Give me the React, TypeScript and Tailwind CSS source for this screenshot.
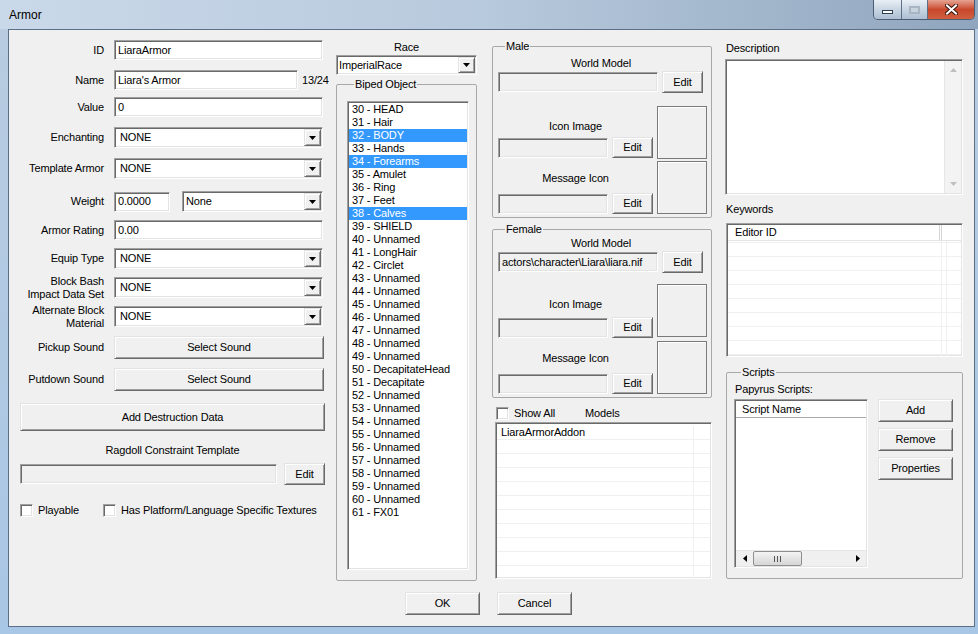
import React from 'react';

const sunken =
  'border border-t-[#a0a0a0] border-l-[#a0a0a0] border-r-white border-b-white shadow-[inset_1px_1px_0_#696969,inset_-1px_-1px_0_#e3e3e3]';
const raised =
  'border border-t-[#e3e3e3] border-l-[#e3e3e3] border-r-[#696969] border-b-[#696969] shadow-[inset_1px_1px_0_#ffffff,inset_-1px_-1px_0_#a0a0a0] bg-[#f0f0f0]';
const group = 'border border-[#a8a8a8] rounded-[2px] min-w-0';

const biped = [
  '30 - HEAD', '31 - Hair', '32 - BODY', '33 - Hands', '34 - Forearms', '35 - Amulet',
  '36 - Ring', '37 - Feet', '38 - Calves', '39 - SHIELD', '40 - Unnamed', '41 - LongHair',
  '42 - Circlet', '43 - Unnamed', '44 - Unnamed', '45 - Unnamed', '46 - Unnamed',
  '47 - Unnamed', '48 - Unnamed', '49 - Unnamed', '50 - DecapitateHead', '51 - Decapitate',
  '52 - Unnamed', '53 - Unnamed', '54 - Unnamed', '55 - Unnamed', '56 - Unnamed',
  '57 - Unnamed', '58 - Unnamed', '59 - Unnamed', '60 - Unnamed', '61 - FX01'
];
const selected = ['32 - BODY', '34 - Forearms', '38 - Calves'];

function Edit({ w, value = '', disabled = false, className = '' }: { w: string; value?: string; disabled?: boolean; className?: string }) {
  return (
    <div className={`${sunken} ${disabled ? 'bg-[#f0f0f0]' : 'bg-white'} h-[20px] flex items-center pl-[3px] whitespace-nowrap overflow-hidden shrink-0 ${w} ${className}`}>
      {value}
    </div>
  );
}

function Arrow() {
  return (
    <svg width="7" height="4" viewBox="0 0 7 4">
      <polygon points="0,0 7,0 3.5,4" fill="#000" />
    </svg>
  );
}

function Combo({ w, value, pad = 'pl-[5px]', h = 'h-[21px]', className = '' }: { w: string; value: string; pad?: string; h?: string; className?: string }) {
  return (
    <div className={`${sunken} bg-white ${h} ${w} flex items-stretch shrink-0 ${className}`}>
      <div className={`flex-1 flex items-center ${pad}`}>{value}</div>
      <div className={`${raised} w-[17px] m-[1px] flex items-center justify-center`}>
        <Arrow />
      </div>
    </div>
  );
}

function Btn({ className = '', children }: { className?: string; children: React.ReactNode }) {
  return <div className={`${raised} flex items-center justify-center shrink-0 ${className}`}>{children}</div>;
}

function Check({ className = '' }: { className?: string }) {
  return <div className={`${sunken} bg-white w-[13px] h-[13px] shrink-0 ${className}`} />;
}

function Row({ label, h, className = '', children }: { label: React.ReactNode; h: string; className?: string; children: React.ReactNode }) {
  return (
    <div className={`flex items-center ${h} ${className}`}>
      <div className="w-[84px] text-right leading-[13px] shrink-0">{label}</div>
      <div className="ml-[10px] flex items-center whitespace-nowrap">{children}</div>
    </div>
  );
}

function FieldRow({ value = '', w = 'w-[110px]', gap = 'ml-[4px]' }: { value?: string; w?: string; gap?: string }) {
  return (
    <div className="flex items-center">
      <Edit w={w} value={value} disabled />
      <Btn className={`${gap} w-[41px] h-[21px]`}>Edit</Btn>
    </div>
  );
}

function TitleButtons() {
  return (
    <div className="flex mr-[3px] h-[20px] rounded-b-[5px] border border-t-0 border-[#4a5d74] overflow-hidden">
      <div className="w-[28px] bg-linear-to-b from-[#e9eff5] via-[#c8d5e3] to-[#aebfd2] border-r border-[#5d6f85] flex items-center justify-center">
        <div className="w-[11px] h-[4px] bg-white border border-[#2f3f52] mt-[5px]" />
      </div>
      <div className="w-[26px] bg-linear-to-b from-[#e9eff5] via-[#c8d5e3] to-[#aebfd2] border-r border-[#5d6f85] flex items-center justify-center">
        <div className="w-[11px] h-[8px] border-2 border-[#a9b5c2] bg-[#c9d3de]" />
      </div>
      <div className="w-[46px] bg-linear-to-b from-[#e4a391] via-[#c9472c] to-[#d0603f] flex items-center justify-center">
        <svg width="13" height="11" viewBox="0 0 13 11">
          <path d="M2 1.5 L11 9.5 M11 1.5 L2 9.5" stroke="#3a1710" strokeWidth="4" strokeLinecap="square" />
          <path d="M2 1.5 L11 9.5 M11 1.5 L2 9.5" stroke="#ffffff" strokeWidth="2" strokeLinecap="square" />
        </svg>
      </div>
    </div>
  );
}

function LeftColumn() {
  return (
    <div className="w-[305px] ml-[11px] flex flex-col shrink-0">
      <Row className="mt-[10px]" h="h-[20px]" label="ID"><Edit w="w-[209px]" value="LiaraArmor" /></Row>
      <Row className="mt-[10px]" h="h-[20px]" label="Name">
        <Edit w="w-[184px]" value="Liara's Armor" />
        <span className="ml-[4px]">13/24</span>
      </Row>
      <Row className="mt-[7px]" h="h-[20px]" label="Value"><Edit w="w-[209px]" value="0" /></Row>
      <Row className="mt-[10px]" h="h-[21px]" label="Enchanting"><Combo w="w-[209px]" value="NONE" /></Row>
      <Row className="mt-[10px]" h="h-[21px]" label="Template Armor"><Combo w="w-[209px]" value="NONE" /></Row>
      <Row className="mt-[12px]" h="h-[21px]" label="Weight">
        <Edit w="w-[56px]" value="0.0000" />
        <Combo className="ml-[12px]" w="w-[141px]" value="None" pad="pl-[3px]" />
      </Row>
      <Row className="mt-[8px]" h="h-[20px]" label="Armor Rating"><Edit w="w-[209px]" value="0.00" /></Row>
      <Row className="mt-[8px]" h="h-[21px]" label="Equip Type"><Combo w="w-[209px]" value="NONE" /></Row>
      <Row className="mt-[8px]" h="h-[21px]" label={<>Block Bash<br />Impact Data Set</>}><Combo w="w-[209px]" value="NONE" /></Row>
      <Row className="mt-[8px]" h="h-[21px]" label={<>Alternate Block<br />Material</>}><Combo w="w-[209px]" value="NONE" /></Row>
      <Row className="mt-[9px]" h="h-[23px]" label="Pickup Sound"><Btn className="w-[210px] h-[23px]">Select Sound</Btn></Row>
      <Row className="mt-[9px]" h="h-[23px]" label="Putdown Sound"><Btn className="w-[210px] h-[23px]">Select Sound</Btn></Row>
      <Btn className="mt-[12px] w-[305px] h-[28px]">Add Destruction Data</Btn>
      <div className="mt-[13px] text-center leading-[13px]">Ragdoll Constraint Template</div>
      <div className="mt-[6px] h-[22px] flex items-center">
        <Edit w="w-[257px]" disabled />
        <Btn className="ml-[7px] w-[41px] h-[22px]">Edit</Btn>
      </div>
      <div className="mt-[18px] h-[14px] flex items-center whitespace-nowrap">
        <Check />
        <span className="ml-[5px]">Playable</span>
        <Check className="ml-[24px]" />
        <span className="ml-[5px]">Has Platform/Language Specific Textures</span>
      </div>
    </div>
  );
}

function MiddleColumn() {
  return (
    <div className="w-[141px] ml-[11px] flex flex-col shrink-0">
      <div className="mt-[11px] leading-[13px] text-center">Race</div>
      <Combo className="mt-[1px]" w="w-[141px]" h="h-[20px]" value="ImperialRace" pad="pl-[2px]" />
      <fieldset className={`${group} mt-[3px] h-[503px] pl-[10px] pr-[8px] pt-[10px]`}>
        <legend className="ml-[7px] px-[1px] leading-[13px]">Biped Object</legend>
        <div className={`${sunken} bg-white w-[122px] h-[469px] p-[1px] overflow-hidden`}>
          {biped.map((b) => (
            <div
              key={b}
              className={`h-[13px] leading-[13px] pl-[3px] whitespace-nowrap ${selected.includes(b) ? 'bg-[#3399ff] text-white' : ''}`}
            >
              {b}
            </div>
          ))}
        </div>
      </fieldset>
    </div>
  );
}

function ModelGroup({ title, path, className = '', female = false }: { title: string; path: string; className?: string; female?: boolean }) {
  return (
    <fieldset className={`${group} w-[220px] pl-[5px] pr-[3px] pb-[3px] ${className}`}>
      <legend className="ml-[7px] px-[1px] leading-[13px]">{title}</legend>
      <div className={`${female ? 'mt-[1px]' : 'mt-[4px]'} w-[206px] text-center leading-[13px]`}>World Model</div>
      <div className="mt-[1px] h-[22px] flex items-center">
        <Edit w="w-[160px]" value={path} disabled className="pl-[1px]" />
        <Btn className="ml-[4px] w-[41px] h-[22px]">Edit</Btn>
      </div>
      <div className={`${female ? 'mt-[11px]' : 'mt-[13px]'} flex`}>
        <div className="w-[155px] flex flex-col">
          <div className="mt-[14px] text-center leading-[13px]">Icon Image</div>
          <div className={female ? 'mt-[6px]' : 'mt-[4px]'}><FieldRow /></div>
          <div className="mt-[14px] text-center leading-[13px]">Message Icon</div>
          <div className="mt-[8px]"><FieldRow /></div>
        </div>
        <div className="ml-[4px] flex flex-col">
          <div className="w-[50px] h-[53px] border border-[#7a7a7a] shadow-[inset_1px_1px_0_#ffffff]" />
          <div className={`${female ? 'mt-[4px]' : 'mt-[2px]'} w-[50px] h-[53px] border border-[#7a7a7a] shadow-[inset_1px_1px_0_#ffffff]`} />
        </div>
      </div>
    </fieldset>
  );
}

function ThirdColumn() {
  return (
    <div className="w-[220px] ml-[15px] flex flex-col shrink-0">
      <ModelGroup className="mt-[10px]" title="Male" path="" />
      <ModelGroup className="mt-[5px]" title="Female" path="actors\character\Liara\liara.nif" female />
      <div className="mt-[9px] h-[13px] flex items-center ml-[4px] whitespace-nowrap">
        <Check />
        <span className="ml-[5px]">Show All</span>
        <span className="ml-[30px]">Models</span>
      </div>
      <div className={`${sunken} bg-white mt-[2px] ml-[3px] w-[217px] h-[157px] p-[1px] overflow-hidden`}>
        <div className="h-[2px]" />
        {Array.from({ length: 11 }).map((_, i) => (
          <div key={i} className="h-[14px] flex border-b border-[#f0f0f0]">
            <div className="w-[197px] pl-[4px] leading-[13px] border-r border-[#f0f0f0]">{i === 0 ? 'LiaraArmorAddon' : ''}</div>
            <div className="flex-1" />
          </div>
        ))}
      </div>
    </div>
  );
}

function RightColumn() {
  return (
    <div className="w-[237px] ml-[14px] flex flex-col shrink-0">
      <div className="mt-[12px] leading-[13px]">Description</div>
      <div className={`${sunken} bg-white mt-[4px] -ml-[1px] w-[238px] h-[136px] flex justify-end`}>
        <div className="w-[17px] my-[1px] mr-[1px] bg-[#f3f3f3] border-l border-[#e6e6e6] flex flex-col justify-between items-center py-[7px]">
          <svg width="7" height="4" viewBox="0 0 7 4"><polygon points="0,4 7,4 3.5,0" fill="#bfbfbf" /></svg>
          <svg width="7" height="4" viewBox="0 0 7 4"><polygon points="0,0 7,0 3.5,4" fill="#bfbfbf" /></svg>
        </div>
      </div>
      <div className="mt-[8px] leading-[13px]">Keywords</div>
      <div className={`${sunken} bg-white mt-[7px] w-[237px] h-[134px] p-[1px] overflow-hidden`}>
        <div className="h-[16px] flex border-b border-[#e5e5e5]">
          <div className="w-[212px] pl-[7px] flex items-center leading-[13px] border-r border-[#d5d5d5]">Editor ID</div>
          <div className="w-[2px] border-r border-[#d5d5d5]" />
          <div className="flex-1" />
        </div>
        <div className="h-[2px] flex border-b border-[#f0f0f0]">
          <div className="w-[214px] border-r border-[#f0f0f0]" />
          <div className="w-[5px] border-r border-[#f0f0f0]" />
        </div>
        {Array.from({ length: 9 }).map((_, i) => (
          <div key={i} className="h-[14px] flex border-b border-[#f0f0f0]">
            <div className="w-[214px] border-r border-[#f0f0f0]" />
            <div className="w-[5px] border-r border-[#f0f0f0]" />
          </div>
        ))}
      </div>
      <fieldset className={`${group} mt-[9px] w-[237px] pl-[7px] pb-[10px]`}>
        <legend className="ml-[7px] px-[1px] leading-[13px]">Scripts</legend>
        <div className="mt-[4px] ml-[1px] leading-[13px]">Papyrus Scripts:</div>
        <div className="mt-[3px] flex">
          <div className={`${sunken} bg-white w-[134px] h-[169px] p-[1px] flex flex-col`}>
            <div className="h-[17px] pl-[6px] flex items-center border-b border-[#a8a8a8] leading-[13px]">Script Name</div>
            <div className="flex-1" />
            <div className="h-[16px] flex items-center bg-[#f0f0f0] border-t border-[#e6e6e6]">
              <div className="w-[17px] flex justify-center">
                <svg width="4" height="7" viewBox="0 0 4 7"><polygon points="4,0 4,7 0,3.5" fill="#000" /></svg>
              </div>
              <div className="w-[49px] h-[15px] rounded-[2px] border border-[#8f8f8f] bg-linear-to-b from-[#f4f4f4] to-[#d6d6d6] flex items-center justify-center gap-[2px]">
                <div className="w-[1px] h-[6px] bg-[#555]" />
                <div className="w-[1px] h-[6px] bg-[#555]" />
                <div className="w-[1px] h-[6px] bg-[#555]" />
              </div>
              <div className="flex-1" />
              <div className="w-[17px] flex justify-center">
                <svg width="4" height="7" viewBox="0 0 4 7"><polygon points="0,0 0,7 4,3.5" fill="#000" /></svg>
              </div>
            </div>
          </div>
          <div className="ml-[10px] flex flex-col gap-[6px]">
            <Btn className="w-[75px] h-[23px]">Add</Btn>
            <Btn className="w-[75px] h-[23px]">Remove</Btn>
            <Btn className="w-[75px] h-[23px]">Properties</Btn>
          </div>
        </div>
      </fieldset>
    </div>
  );
}

export default function App() {
  return (
    <div className="w-[978px] h-[634px] overflow-hidden flex flex-col bg-linear-to-b from-[#b9cce0] to-[#a8c6e5] font-['Liberation_Sans',Arial,sans-serif] text-[11px] tracking-[-0.15px] text-black">
      <div className="h-[29px] shrink-0 flex items-start justify-between bg-linear-to-r from-[#cad9ea] via-[#b7c9dc] to-[#90a6be]">
        <div className="pl-[9px] pt-[8px] text-[12px] leading-[15px] tracking-normal">Armor</div>
        <TitleButtons />
      </div>
      <div className="ml-[8px] mr-[3px] h-[598px] shrink-0 bg-[#f0f0f0] border border-[#5b6f86] flex flex-col">
        <div className="h-[550px] flex items-start">
          <LeftColumn />
          <MiddleColumn />
          <ThirdColumn />
          <RightColumn />
        </div>
        <div className="mt-[12px] ml-[396px] flex gap-[17px]">
          <Btn className="w-[75px] h-[23px]">OK</Btn>
          <Btn className="w-[75px] h-[23px]">Cancel</Btn>
        </div>
      </div>
    </div>
  );
}
